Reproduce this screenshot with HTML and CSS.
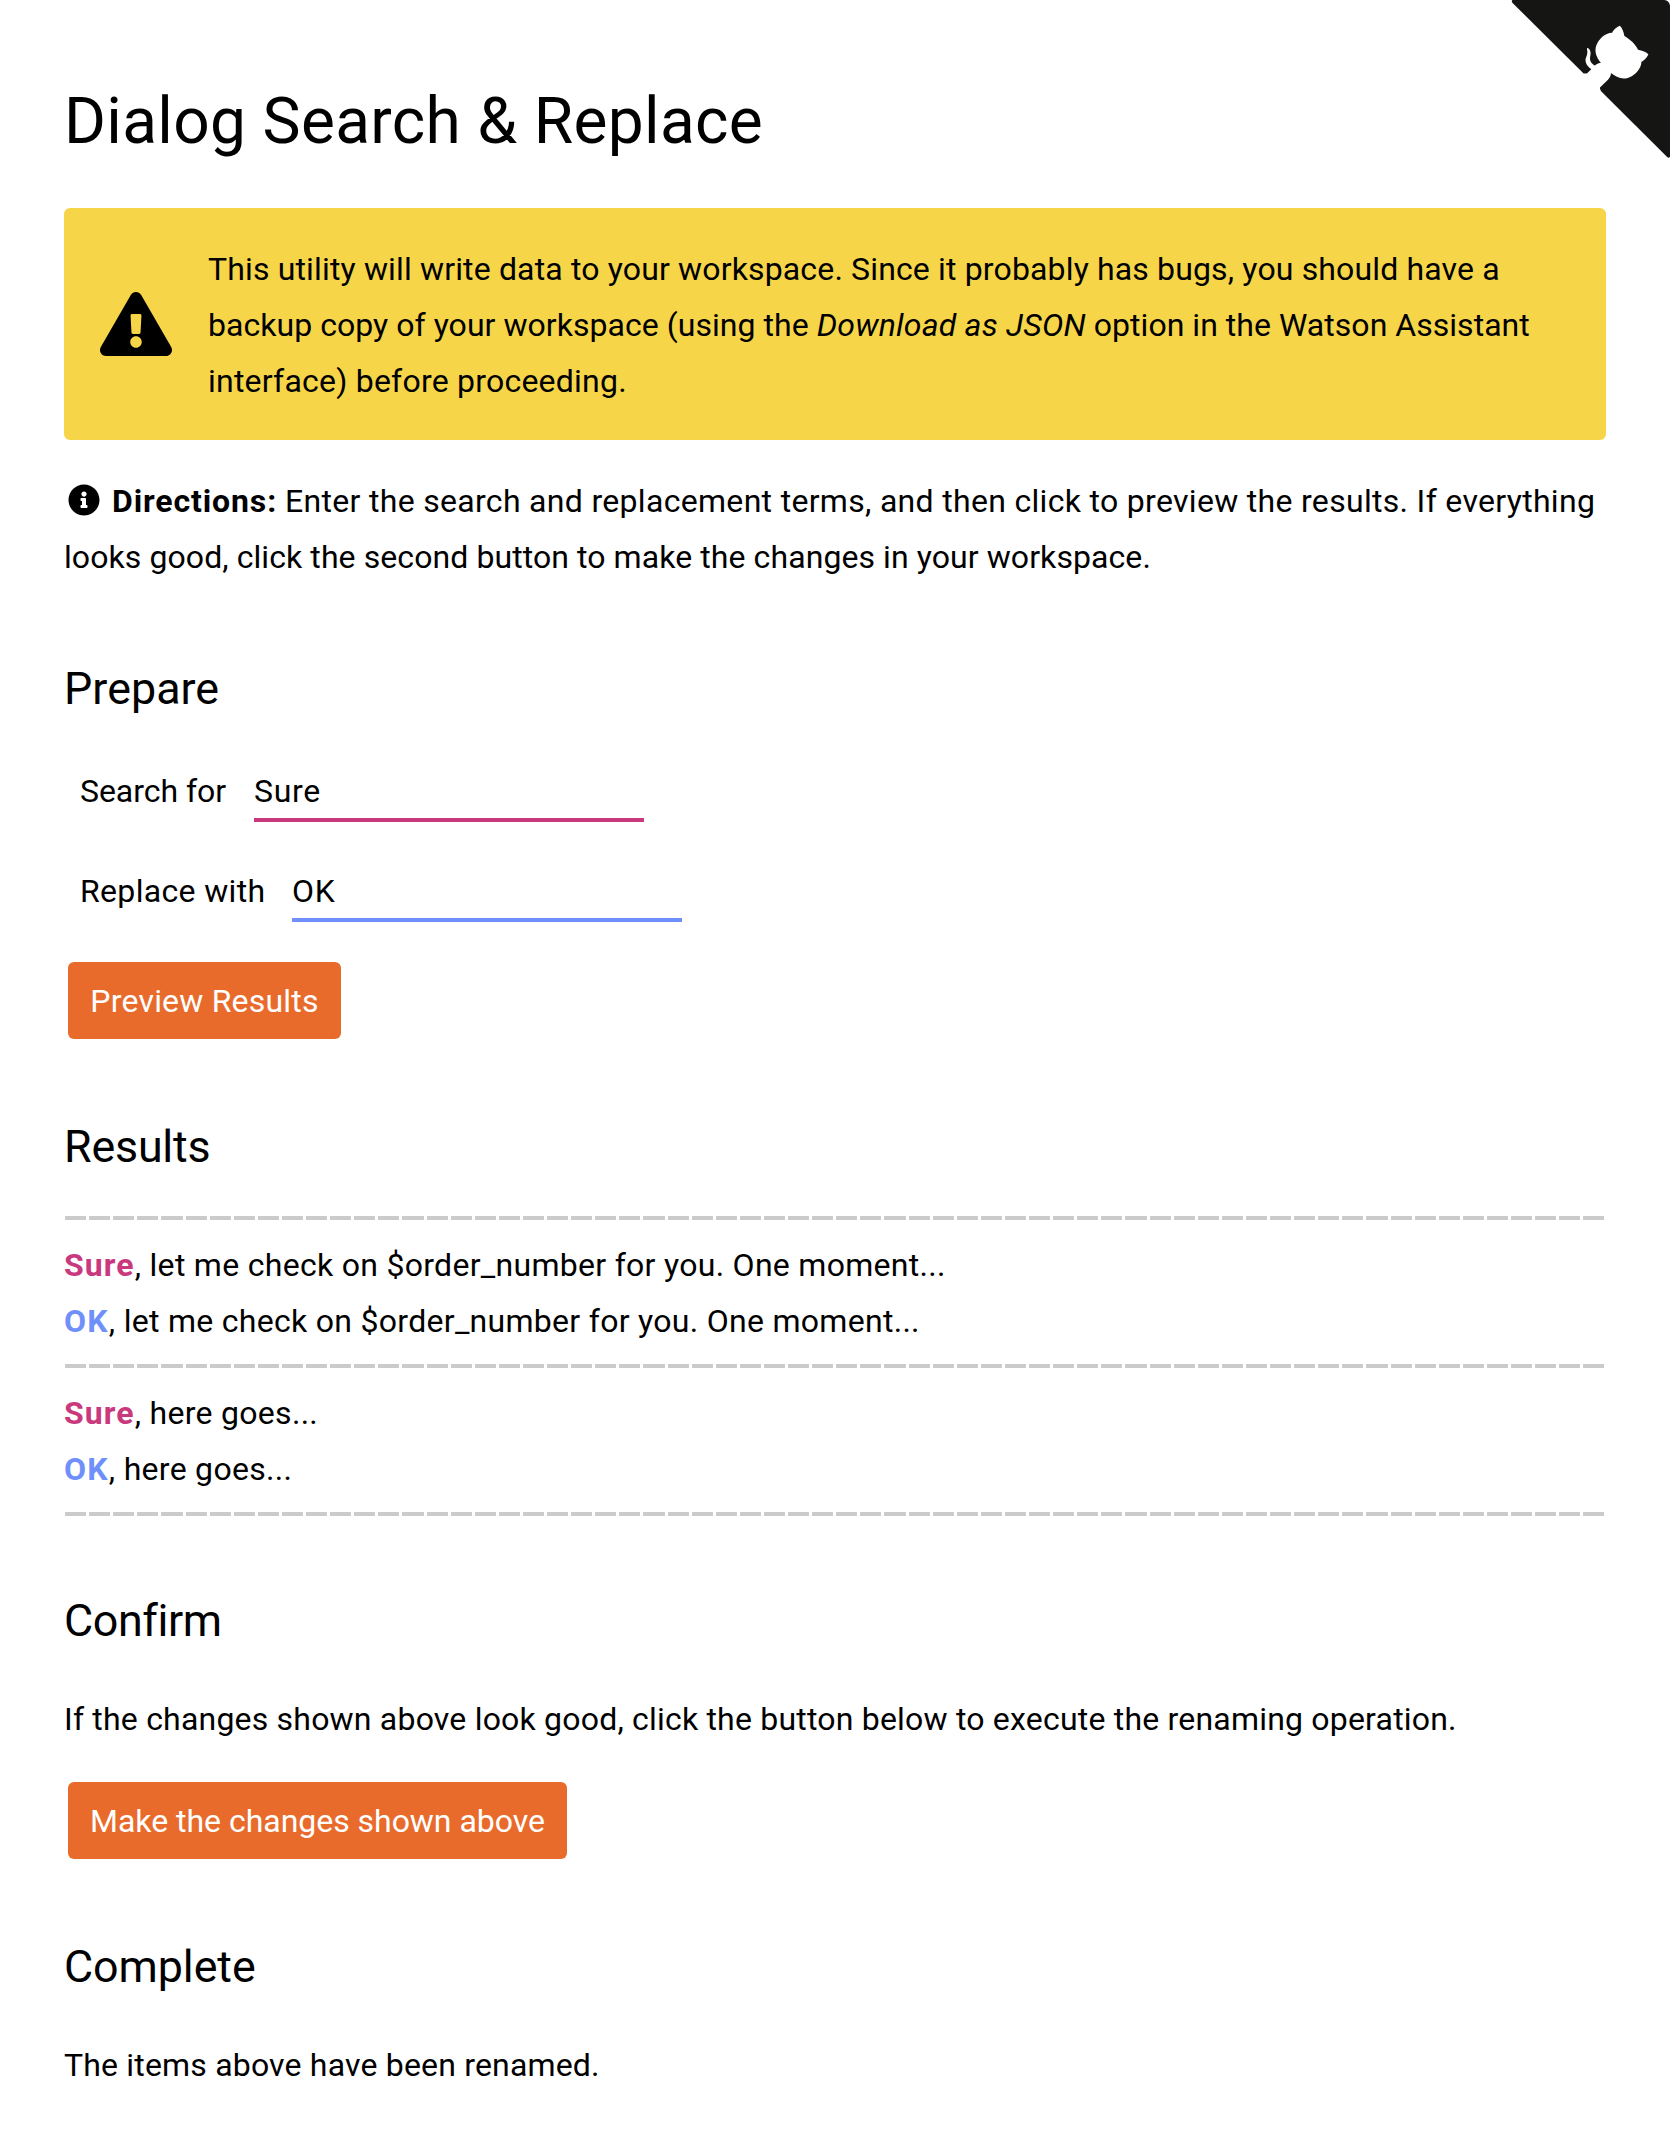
FILE: index.html
```html
<!DOCTYPE html>
<html lang="en">
<head>
<meta charset="utf-8">
<title>Dialog Search &amp; Replace</title>
<link rel="stylesheet" href="styles.css">
</head>
<body>
<a class="github-corner" aria-label="View source on GitHub">
  <svg width="160" height="160" viewBox="0 0 250 250" aria-hidden="true">
    <path class="corner-bg" d="M4,0 Q1.500,1.500 4,4.500 L115,115 L130,115 L142,142 L245.500,245.500 Q248,248 250,245 L250,9 Q249,1 241,0 Z"/>
    <path class="corner-cat" d="M128.300,109 C113.800,99.700 119,89.600 119,89.600 C122,82.700 120.500,78.600 120.500,78.600 C119.200,72 123.400,76.300 123.400,76.300 C127.300,80.900 125.500,87.300 125.500,87.300 C122.900,97.600 130.600,101.900 134.400,103.200"/>
    <path class="corner-cat" d="M115,115 C114.900,115.100 118.700,116.500 119.800,115.400 L133.700,101.600 C136.900,99.200 139.900,98.400 142.200,98.600 C133.800,88 127.500,74.400 143.800,58 C148.500,53.400 154,51.200 159.700,51 C160.300,49.400 163.200,43.600 171.400,40.100 C171.400,40.100 176.100,42.500 178.800,56.200 C183.100,58.600 187.200,61.800 190.900,65.400 C194.500,69 197.700,73.200 200.100,77.600 C213.800,80.200 216.300,84.900 216.300,84.900 C212.700,93.100 206.900,96 205.400,96.600 C205.100,102.400 203,107.800 198.300,112.500 C181.900,128.900 168.300,122.500 157.700,114.100 C157.900,116.900 156.700,120.900 152.700,124.900 L141,136.500 C139.800,137.700 141.600,141.900 141.800,141.800 Z"/>
  </svg>
</a>
<main class="page">
  <h1 class="title">Dialog Search &amp; Replace</h1>

  <div class="warning">
    <svg class="warning-icon" viewBox="0 0 576 512" aria-hidden="true"><path d="M569.517 440.013C587.975 472.007 564.806 512 527.94 512H48.054c-36.937 0-59.999-40.055-41.577-71.987L246.423 23.985c18.467-32.009 64.72-31.951 83.154 0l239.94 416.028zM288 354c-25.405 0-46 20.595-46 46s20.595 46 46 46 46-20.595 46-46-20.595-46-46-46zm-43.673-165.346l7.418 136c.347 6.364 5.609 11.346 11.982 11.346h48.546c6.373 0 11.635-4.982 11.982-11.346l7.418-136c.375-6.874-5.098-12.654-11.982-12.654h-63.383c-6.884 0-12.356 5.78-11.981 12.654z"/></svg>
    <p class="text"><span class="warn-1">This utility will write data to your workspace. Since it probably has bugs, you should have a</span><br><span class="warn-2">backup copy of your workspace (using the</span> <em class="option-name">Download as JSON</em> <span class="warn-3">option in the Watson Assistant</span><br><span class="warn-4">interface) before proceeding.</span></p>
  </div>

  <p class="text directions"><svg class="info-icon" viewBox="0 0 512 512" aria-hidden="true"><path d="M256 8C119.043 8 8 119.083 8 256c0 136.997 111.043 248 248 248s248-111.003 248-248C504 119.083 392.957 8 256 8zm0 110c23.196 0 42 18.804 42 42s-18.804 42-42 42-42-18.804-42-42 18.804-42 42-42zm56 254c0 6.627-5.373 12-12 12h-88c-6.627 0-12-5.373-12-12v-24c0-6.627 5.373-12 12-12h12v-64h-12c-6.627 0-12-5.373-12-12v-24c0-6.627 5.373-12 12-12h64c6.627 0 12 5.373 12 12v100h12c6.627 0 12 5.373 12 12v24z"/></svg><strong class="label-strong">Directions:</strong> <span class="dir-1">Enter the search and replacement terms, and then click to preview the results. If everything</span><br><span class="dir-2">looks good, click the second button to make the changes in your workspace.</span></p>

  <h2 class="heading">Prepare</h2>
  <form class="form">
    <div class="field"><label class="label label-search" for="search">Search for</label><input class="input input-search" id="search" type="text" value="Sure"></div>
    <div class="field"><label class="label label-replace" for="replace">Replace with</label><input class="input input-replace" id="replace" type="text" value="OK"></div>
    <button class="button button-preview" type="button">Preview Results</button>
  </form>

  <h2 class="heading heading-results">Results</h2>
  <div class="results">
    <div class="result">
      <p class="text"><b class="found">Sure</b><span class="rest">, let me check on $order_number for you. One moment...</span></p>
      <p class="text"><b class="replaced">OK</b><span class="rest">, let me check on $order_number for you. One moment...</span></p>
    </div>
    <div class="result">
      <p class="text"><b class="found">Sure</b><span class="rest">, here goes...</span></p>
      <p class="text"><b class="replaced">OK</b><span class="rest">, here goes...</span></p>
    </div>
  </div>

  <h2 class="heading heading-confirm">Confirm</h2>
  <p class="text confirm">If the changes shown above look good, click the button below to execute the renaming operation.</p>
  <button class="button button-apply" type="button">Make the changes shown above</button>

  <h2 class="heading heading-complete">Complete</h2>
  <p class="text complete">The items above have been renamed.</p>
</main>
</body>
</html>
```
FILE: styles.css
```css
* { box-sizing: border-box; }

body {
  margin: 0;
  background: #fff;
  color: #000;
  font-family: Roboto, "Liberation Sans", sans-serif;
  font-size: 32px;
  line-height: 56px;
}

.github-corner { position: absolute; top: 0; right: 0; line-height: 0; }
.corner-bg { fill: #151513; }
.corner-cat { fill: #fff; }

.page { display: flex; flex-direction: column; align-items: flex-start; padding: 66px 64px 0; }

.title { height: 142px; margin: 0; font-size: 64px; font-weight: 400; line-height: 112px; letter-spacing: 0.33px; }

.text { margin: 0; padding-top: 1px; margin-bottom: -1px; white-space: nowrap; }

.warning {
  display: flex;
  align-items: center;
  align-self: stretch;
  gap: 36px;
  height: 232px;
  padding: 0 36px;
  border-radius: 6px;
  background: #f6d549;
}
.warning-icon { width: 72px; height: 64px; }
.warn-1 { letter-spacing: 0.15px; }
.warn-2 { letter-spacing: 0.04px; }
.option-name { letter-spacing: 0.21px; }
.warn-3 { letter-spacing: 0.03px; }
.warn-4 { letter-spacing: 0.22px; }

.directions { margin-top: 32px; }
.info-icon { width: 32px; height: 32px; margin: 0 12px 0 4px; vertical-align: -4px; }
.label-strong { letter-spacing: 0.88px; font-weight: 700; }
.dir-1 { letter-spacing: 0.31px; }
.dir-2 { letter-spacing: 0.08px; }

.heading { height: 78px; margin: 64px 0 0; padding-top: 2px; font-size: 44.8px; font-weight: 400; line-height: 78px; letter-spacing: 0.05px; }
.heading-results { margin-top: 67px; letter-spacing: -0.2px; }
.heading-confirm { letter-spacing: -0.4px; }
.heading-complete { margin-top: 67px; letter-spacing: -0.07px; }

.form { display: flex; flex-direction: column; align-items: flex-start; padding: 36px 0 0 4px; }
.field { display: flex; height: 60px; margin-bottom: 40px; padding-left: 12px; }
.label { padding-top: 1px; }
.label-search { width: 174px; letter-spacing: -0.05px; }
.label-replace { width: 212px; letter-spacing: 0.33px; }
.input { width: 390px; height: 60px; padding: 2px 0 0; border: 0; border-bottom: 4px solid; background: none; color: #000; font: inherit; outline: 0; }
.input-search { border-color: #c9397d; letter-spacing: 0.7px; }
.input-replace { border-color: #6f90fa; letter-spacing: 0.8px; }

.button { height: 77px; padding: 0; border: 0; border-radius: 6px; background: #e96b2c; color: #fff; font: inherit; }
.button-preview { width: 273px; margin-top: 0; letter-spacing: 0.2px; }
.button-apply { width: 499px; margin: 36px 0 0 4px; letter-spacing: -0.03px; }

.results { align-self: stretch; margin-top: 32px; }
.result, .results::after {
  background: repeating-linear-gradient(90deg, #cbcbcb 0 21.1px, transparent 21.1px 24.1px) 1px 0 / 1540px 4px no-repeat;
}
.results::after { content: ""; display: block; height: 4px; }
.result { height: 148px; padding-top: 20px; }
.found { color: #c9397d; letter-spacing: 1.1px; }
.replaced { color: #6f90fa; letter-spacing: 1.2px; }
.rest { letter-spacing: 0.29px; }

.confirm { margin-top: 32px; letter-spacing: 0.2px; }
.complete { margin-top: 32px; letter-spacing: 0.18px; }
```
